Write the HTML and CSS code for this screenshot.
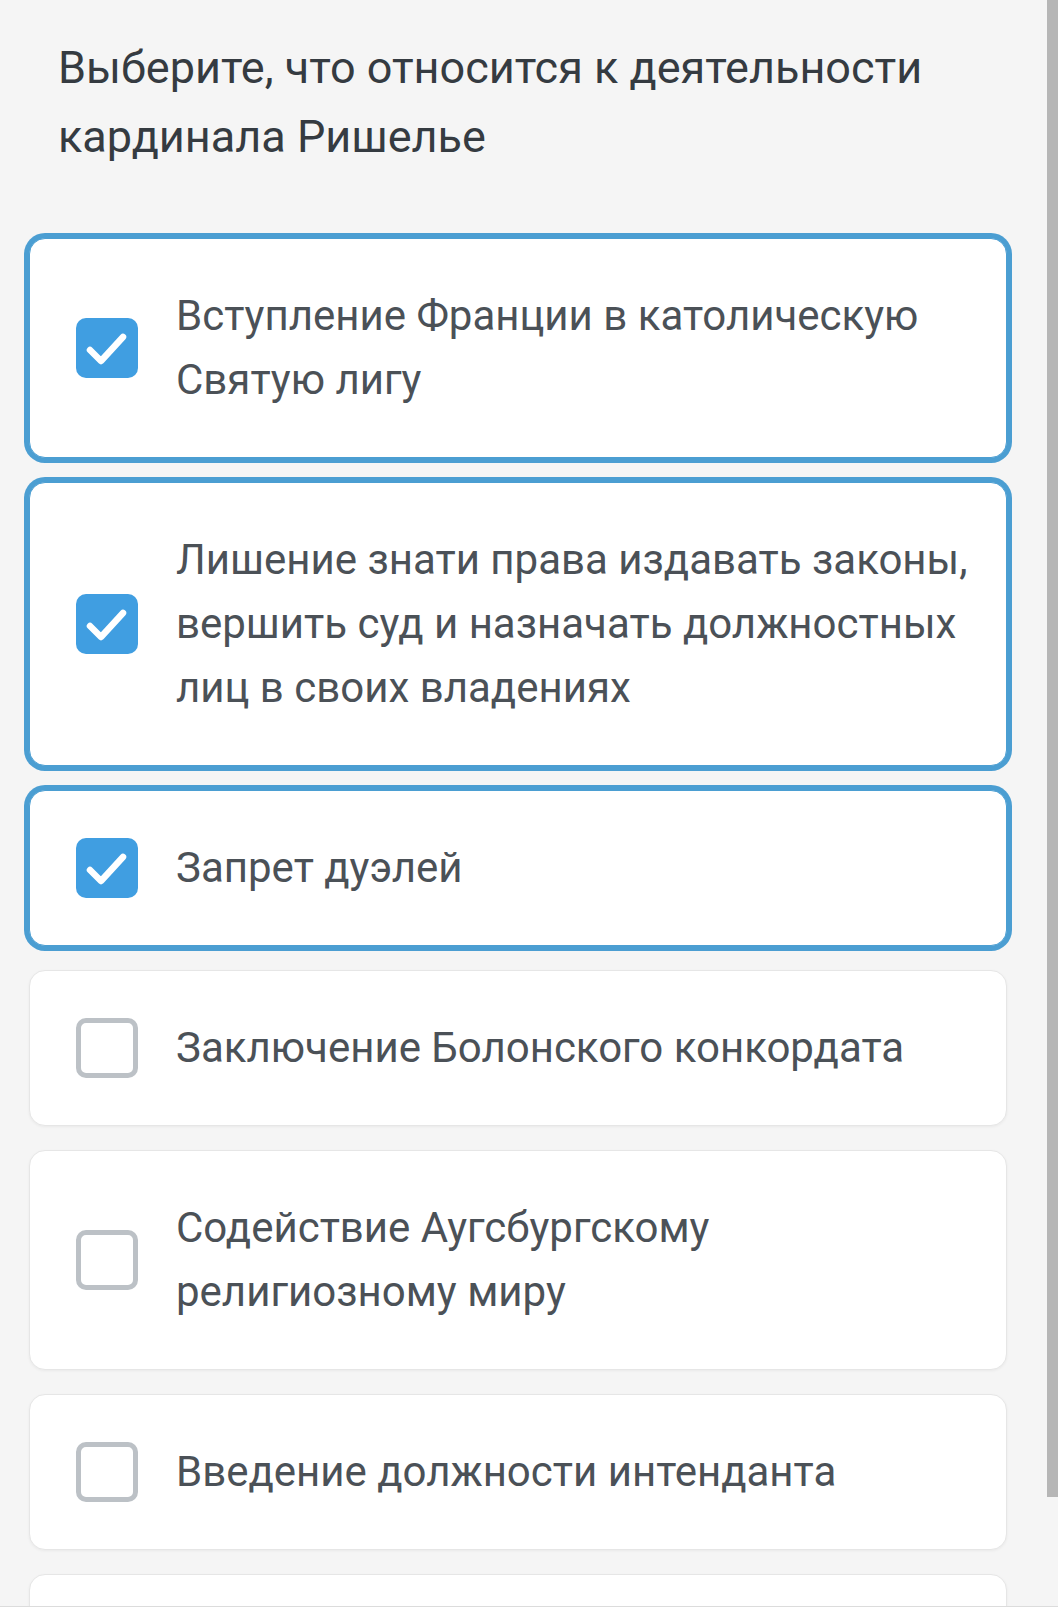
FILE: index.html
```html
<!DOCTYPE html>
<html lang="ru">
<head>
<meta charset="utf-8">
<title>Вопрос</title>
<link rel="stylesheet" href="styles.css">
</head>
<body>
<main class="page">
  <h1 class="question">Выберите, что относится к деятельности<br>кардинала Ришелье</h1>
  <ul class="options">
    <li class="option selected">
      <span class="box checked"><svg viewBox="0 0 62 60" width="62" height="60"><polyline points="14,32 25,43 47,19" /></svg></span>
      <span class="label">Вступление Франции в католическую<br>Святую лигу</span>
    </li>
    <li class="option selected">
      <span class="box checked"><svg viewBox="0 0 62 60" width="62" height="60"><polyline points="14,32 25,43 47,19" /></svg></span>
      <span class="label">Лишение знати права издавать законы,<br>вершить суд и назначать должностных<br>лиц в своих владениях</span>
    </li>
    <li class="option selected">
      <span class="box checked"><svg viewBox="0 0 62 60" width="62" height="60"><polyline points="14,32 25,43 47,19" /></svg></span>
      <span class="label">Запрет дуэлей</span>
    </li>
    <li class="option">
      <span class="box"></span>
      <span class="label">Заключение Болонского конкордата</span>
    </li>
    <li class="option">
      <span class="box"></span>
      <span class="label">Содействие Аугсбургскому<br>религиозному миру</span>
    </li>
    <li class="option">
      <span class="box"></span>
      <span class="label">Введение должности интенданта</span>
    </li>
    <li class="option">
      <span class="box"></span>
      <span class="label">&nbsp;</span>
    </li>
  </ul>
</main>
<div class="scrollbar"></div>
<div class="bottom-bar"></div>
</body>
</html>
```

FILE: styles.css
```css
html, body {
  margin: 0;
  padding: 0;
  height: 1624px;
  overflow: hidden;
  background: #f5f5f5;
}

body {
  font-family: Roboto, "Noto Sans", "Liberation Sans", sans-serif;
}

.page {
  padding: 33px 51px 0 29px;
}

.question {
  margin: 0 0 67px 29px;
  font-size: 45px;
  line-height: 69px;
  font-weight: 400;
  color: #353b41;
}

.options {
  list-style: none;
  margin: 0;
  padding: 0;
  display: flex;
  flex-direction: column;
  gap: 24px;
}

.option {
  display: flex;
  align-items: center;
  gap: 38px;
  padding: 45px 30px 45px 46px;
  background: #ffffff;
  border: 1px solid #e6e6e6;
  border-radius: 16px;
  box-shadow: 0 1px 3px rgba(0, 0, 0, 0.05);
}

.option.selected {
  border-color: #4b9ed2;
  box-shadow: 0 0 0 5px #4b9ed2;
}

.box {
  flex: none;
  box-sizing: border-box;
  width: 62px;
  height: 60px;
  border: 5px solid #bcc1c6;
  border-radius: 10px;
  background: #ffffff;
  display: block;
}

.box.checked {
  border: none;
  background: #409ee1;
}

.box svg {
  display: block;
}

.box svg polyline {
  fill: none;
  stroke: #ffffff;
  stroke-width: 6.5;
  stroke-linecap: round;
  stroke-linejoin: round;
}

.label {
  font-size: 42px;
  line-height: 64px;
  color: #4b5157;
}

.scrollbar {
  position: fixed;
  top: 0;
  right: 0;
  width: 11px;
  height: 1497px;
  background: #b6b6b6;
}

.bottom-bar {
  position: fixed;
  left: 0;
  right: 0;
  bottom: 0;
  height: 17px;
  background: #ffffff;
  border-top: 1px solid #dcdcdc;
}
```
